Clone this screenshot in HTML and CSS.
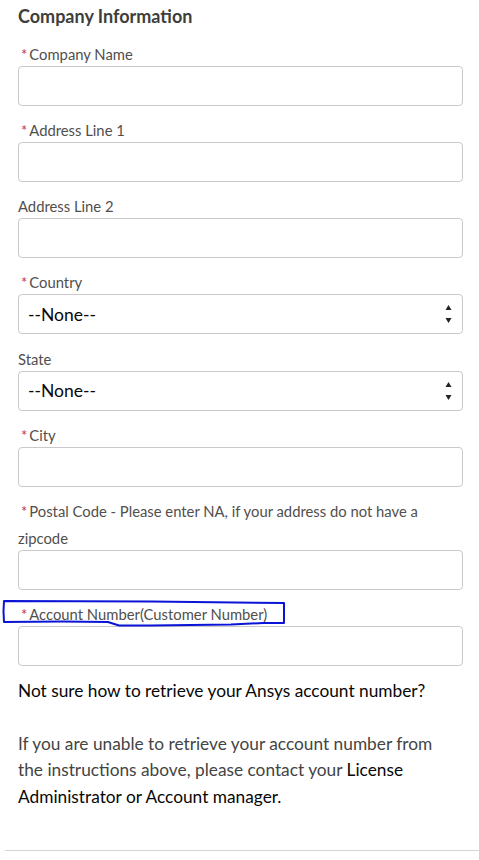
FILE: index.html
```html
<!DOCTYPE html>
<html lang="en">
<head>
    <meta charset="UTF-8">
    <title>Company Information</title>
    <link rel="stylesheet" href="styles.css">
</head>
<body>

<h2 class="section-title">Company Information</h2>

<form class="company-form">
    <div class="field">
        <label class="field-label"><abbr class="required">*</abbr>Company Name</label>
        <input class="field-input" type="text">
    </div>

    <div class="field">
        <label class="field-label"><abbr class="required">*</abbr>Address Line 1</label>
        <input class="field-input" type="text">
    </div>

    <div class="field">
        <label class="field-label">Address Line 2</label>
        <input class="field-input" type="text">
    </div>

    <div class="field">
        <label class="field-label"><abbr class="required">*</abbr>Country</label>
        <div class="select-wrap">
            <select class="field-input field-select">
                <option value="">--None--</option>
            </select>
            <svg class="select-arrows" width="7" height="20" viewBox="0 0 7 20">
                <path d="M3.5 1 L6.5 6 L0.5 6 Z" fill="#222"/>
                <path d="M0.5 14 L6.5 14 L3.5 19 Z" fill="#222"/>
            </svg>
        </div>
    </div>

    <div class="field">
        <label class="field-label">State</label>
        <div class="select-wrap">
            <select class="field-input field-select">
                <option value="">--None--</option>
            </select>
            <svg class="select-arrows" width="7" height="20" viewBox="0 0 7 20">
                <path d="M3.5 1 L6.5 6 L0.5 6 Z" fill="#222"/>
                <path d="M0.5 14 L6.5 14 L3.5 19 Z" fill="#222"/>
            </svg>
        </div>
    </div>

    <div class="field">
        <label class="field-label"><abbr class="required">*</abbr>City</label>
        <input class="field-input" type="text">
    </div>

    <div class="field">
        <label class="field-label"><abbr class="required">*</abbr>Postal Code - Please enter NA, if your address do not have a zipcode</label>
        <input class="field-input" type="text">
    </div>

    <div class="field">
        <label class="field-label"><abbr class="required">*</abbr>Account Number(Customer Number)</label>
        <!-- hand-drawn highlight from the screenshot -->
        <svg class="highlight" width="290" height="30" viewBox="0 0 290 30">
            <path d="M3 1 L150 1.5 L283 3 L283 23 L262 23 L230 24.5 L150 25.5 L118 25.5 L107 22 L60 21.5 L3 22 L2.5 11 Z"
                  fill="none" stroke="#0a14d6" stroke-width="2" stroke-linejoin="round"/>
        </svg>
        <input class="field-input" type="text">
    </div>
</form>

<div class="help-text">
    <span class="dark">Not sure how to retrieve your Ansys account number?</span><br><br>
    If you are unable to retrieve your account number from the instructions above, please contact your <span class="dark">License Administrator or Account manager.</span>
</div>

<div class="divider"></div>

</body>
</html>
```

FILE: styles.css
```css
body {
    font-family: Lato, 'Open Sans', sans-serif;
    background: #ffffff;
    margin: 0;
    padding: 4px 16px 0 18px;
    color: #3e3e3c;
}

.section-title {
    font-size: 18px;
    font-weight: bold;
    line-height: 24px;
    margin: 0 0 14px;
    color: #3e3e3c;
}

.field {
    position: relative;
    margin-bottom: 12.15px;
}

.field-label {
    display: block;
    font-size: 14.8px;
    line-height: 27px;
    margin: -1px 0 -2px;
    color: #514f4d;
}

.required {
    color: #c23934;
    text-decoration: none;
    margin: 0 2px 0 3px;
}

.field-input {
    display: block;
    box-sizing: border-box;
    width: 100%;
    height: 40px;
    border: 1px solid #c9c9c9;
    border-radius: 4px;
    background: #fff;
    font-family: inherit;
    font-size: 17.5px;
    padding: 0 9px;
    margin: 0;
}

.select-wrap {
    position: relative;
}

.field-select {
    appearance: none;
    -webkit-appearance: none;
    color: #080707;
}

.select-arrows {
    position: absolute;
    right: 11px;
    top: 10px;
}

.highlight {
    position: absolute;
    left: -17px;
    top: -1px;
    pointer-events: none;
}

.help-text {
    font-size: 17.3px;
    line-height: 26.4px;
    color: #444444;
    padding-right: 16px;
}

.dark {
    color: #080707;
}

.divider {
    border-top: 1px solid #d4d4d4;
    margin: 40px -16px 0 -13px;
}
```
